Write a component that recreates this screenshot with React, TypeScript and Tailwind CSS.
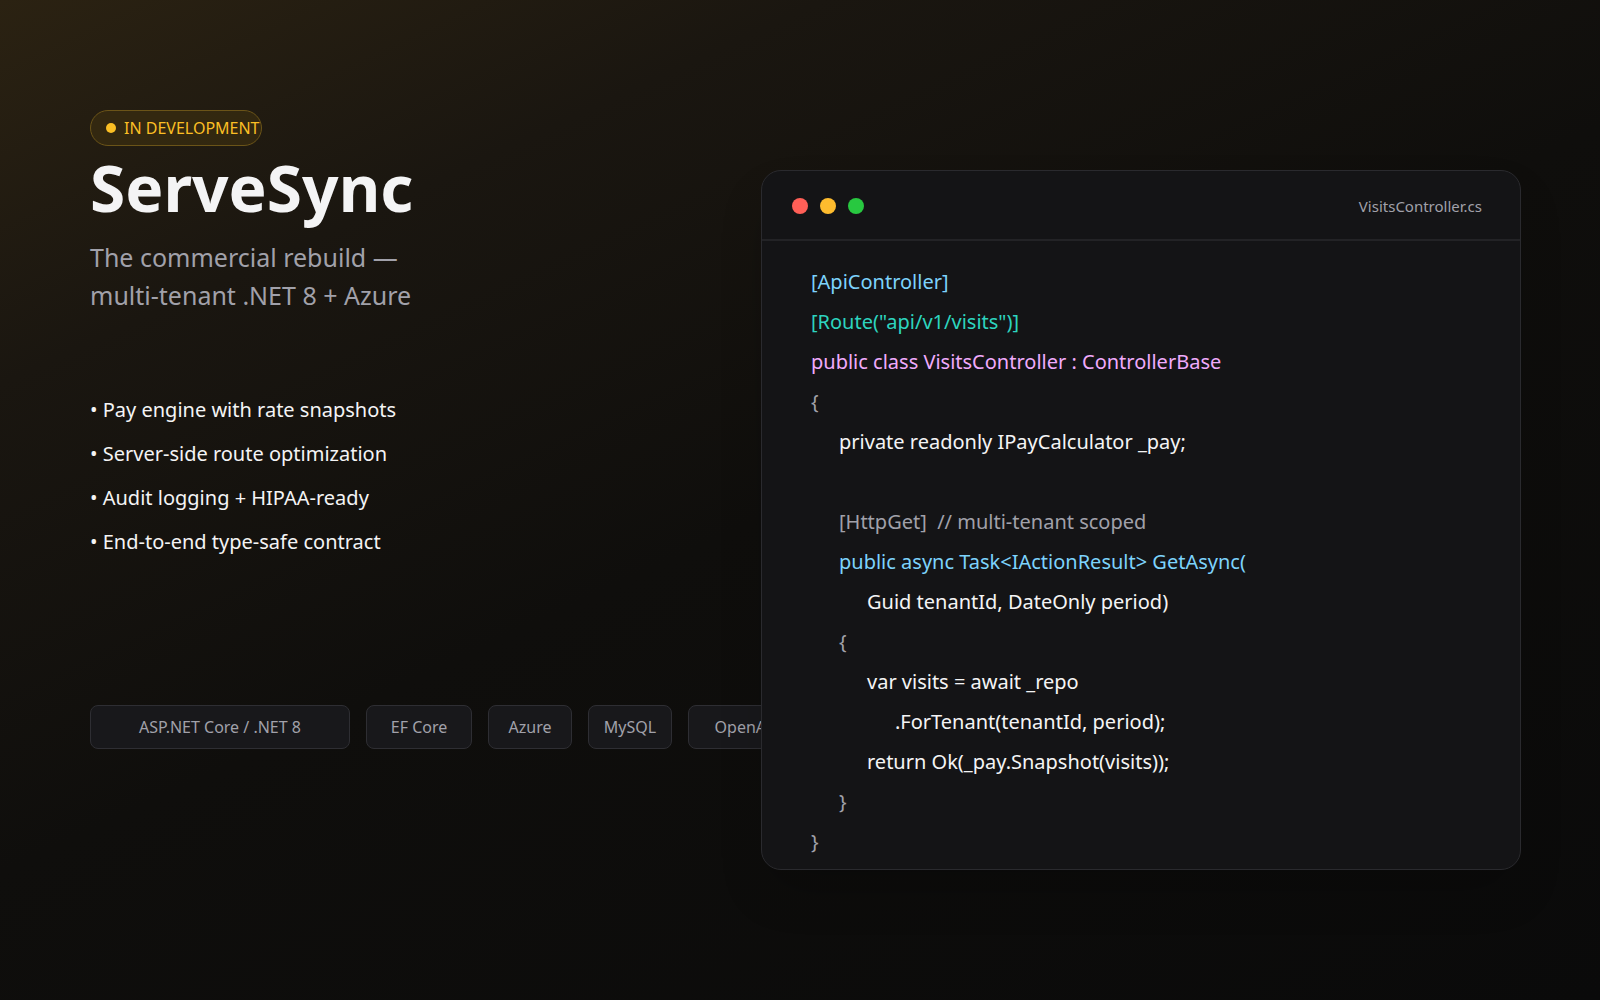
import React from "react";

const bullets = [
  "Pay engine with rate snapshots",
  "Server-side route optimization",
  "Audit logging + HIPAA-ready",
  "End-to-end type-safe contract",
];

const tags = [
  { label: "ASP.NET Core / .NET 8", w: "w-[260px]" },
  { label: "EF Core", w: "w-[106px]" },
  { label: "Azure", w: "w-[84px]" },
  { label: "MySQL", w: "w-[84px]" },
  { label: "OpenAI", w: "w-[110px]" },
];

const code: { text: string; indent: number; color: string }[] = [
  { text: "[ApiController]", indent: 0, color: "text-[#7dd3fc]" },
  { text: '[Route("api/v1/visits")]', indent: 0, color: "text-[#2dd4bf]" },
  { text: "public class VisitsController : ControllerBase", indent: 0, color: "text-[#f0abfc]" },
  { text: "{", indent: 0, color: "text-[#a1a1aa]" },
  { text: "private readonly IPayCalculator _pay;", indent: 1, color: "text-[#f4f4f5]" },
  { text: "\u00a0", indent: 0, color: "text-[#f4f4f5]" },
  { text: "[HttpGet]  // multi-tenant scoped", indent: 1, color: "text-[#a1a1aa]" },
  { text: "public async Task<IActionResult> GetAsync(", indent: 1, color: "text-[#7dd3fc]" },
  { text: "Guid tenantId, DateOnly period)", indent: 2, color: "text-[#f4f4f5]" },
  { text: "{", indent: 1, color: "text-[#a1a1aa]" },
  { text: "var visits = await _repo", indent: 2, color: "text-[#f4f4f5]" },
  { text: ".ForTenant(tenantId, period);", indent: 3, color: "text-[#f4f4f5]" },
  { text: "return Ok(_pay.Snapshot(visits));", indent: 2, color: "text-[#f4f4f5]" },
  { text: "}", indent: 1, color: "text-[#a1a1aa]" },
  { text: "}", indent: 0, color: "text-[#a1a1aa]" },
];

const indents = ["pl-0", "pl-[28px]", "pl-[56px]", "pl-[84px]"];

export default function App() {
  return (
    <main
      className="h-[1000px] w-[1600px] overflow-hidden bg-[#0a0a0a] bg-[linear-gradient(155deg,#2b2212_0%,#1a1610_22%,#0f0e0c_50%,#0a0a0a_100%)] font-['DejaVu_Sans',sans-serif]"
    >
      <div className="flex pl-[90px] pt-[110px]">
        <section className="w-[671px] shrink-0">
          <div className="flex h-[36px] w-[172px] items-center gap-2 whitespace-nowrap rounded-full border border-[#6b5418] bg-[#3a2e10]/70 pl-[15px] text-[16px] text-[#fbbf24]">
            <span className="h-[10px] w-[10px] rounded-full bg-[#fbbf24]" />
            IN DEVELOPMENT
          </div>
          <h1 className="mt-[4px] text-[64px] font-bold leading-[76px] text-[#f4f4f5]">ServeSync</h1>
          <p className="mt-[12px] text-[25px] leading-[38px] text-[#a1a1aa]">
            The commercial rebuild —<br />multi-tenant .NET 8 + Azure
          </p>
          <ul className="mt-[83px] flex flex-col gap-[18px] text-[20px] leading-[26px] text-[#f4f4f5]">
            {bullets.map((b) => (
              <li key={b}>• {b}</li>
            ))}
          </ul>
          <div className="mt-[150px] flex gap-[16px] whitespace-nowrap">
            {tags.map((t) => (
              <div
                key={t.label}
                className={`${t.w} flex h-[44px] shrink-0 items-center justify-center rounded-[8px] border border-[#2e2e33] bg-[#18181b] text-[16px] text-[#a1a1aa]`}
              >
                {t.label}
              </div>
            ))}
          </div>
        </section>

        <section className="relative z-10 mt-[60px] h-[700px] w-[760px] shrink-0 overflow-hidden rounded-[20px] border border-[#2a2a2e] bg-[#141416] shadow-2xl">
          <header className="flex h-[70px] items-center justify-between border-b-2 border-[#232326] px-[30px] pt-[2px]">
            <div className="flex gap-[12px]">
              <span className="h-[16px] w-[16px] rounded-full bg-[#ff5f57]" />
              <span className="h-[16px] w-[16px] rounded-full bg-[#febc2e]" />
              <span className="h-[16px] w-[16px] rounded-full bg-[#28c840]" />
            </div>
            <span className="pr-[8px] text-[15px] text-[#a1a1aa]">VisitsController.cs</span>
          </header>
          <div className="flex flex-col gap-[14px] px-[49px] pt-[28px] text-[20px] leading-[26px]">
            {code.map((l, i) => (
              <div key={i} className={`${indents[l.indent]} ${l.color} whitespace-pre`}>
                {l.text}
              </div>
            ))}
          </div>
        </section>
      </div>
    </main>
  );
}
